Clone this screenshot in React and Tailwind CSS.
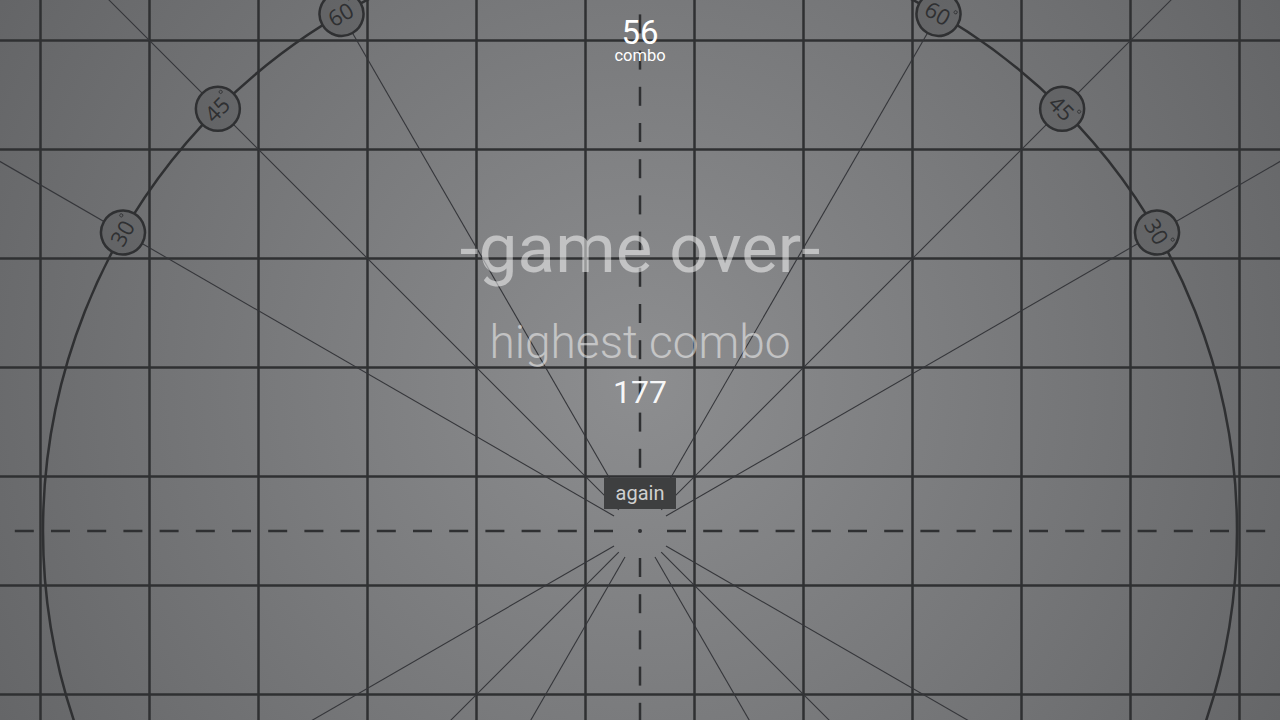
import React from 'react';

// geometry of the protractor board
const CX = 640;
const CY = 531;
const CELL = 109;
const R = 597;
const INK = '#2f3032';

const gridX = Array.from({ length: 12 }, (_, i) => CX + (i - 5.5) * CELL);
const gridY = Array.from({ length: 7 }, (_, i) => CY + (i - 4.5) * CELL);

const dashSteps = Array.from({ length: 17 }, (_, i) => 27 + i * 36.2);

const angles = [30, 45, 60];

function AngleLabel({ angle, side }) {
    const rad = (angle * Math.PI) / 180;
    const x = CX + side * R * Math.cos(rad);
    const y = CY - R * Math.sin(rad);
    const rot = side * (90 - angle);
    return (
        <g transform={`translate(${x} ${y}) rotate(${rot})`}>
            <circle r="22" fill="url(#board)" stroke={INK} strokeWidth="2.5" />
            <text
                x="-1"
                y="8"
                textAnchor="middle"
                fontSize="22"
                fill="#2f3032"
                style={{ fontFamily: '"Open Sans", "DejaVu Sans", sans-serif' }}
            >
                {angle}
            </text>
            <circle cx="14" cy="-10" r="1.6" fill="none" stroke="#2f3032" strokeWidth="0.8" />
        </g>
    );
}

function Board() {
    return (
        <svg className="absolute inset-0" width="1280" height="720" viewBox="0 0 1280 720">
            <defs>
                <radialGradient id="board" gradientUnits="userSpaceOnUse" cx="640" cy="380" r="760">
                    <stop offset="0" stopColor="#8d8e90" />
                    <stop offset="1" stopColor="#636466" />
                </radialGradient>
            </defs>

            {gridX.map((x) => (
                <line key={'v' + x} x1={x} y1="0" x2={x} y2="720" stroke={INK} strokeWidth="2.5" />
            ))}
            {gridY.map((y) => (
                <line key={'h' + y} x1="0" y1={y} x2="1280" y2={y} stroke={INK} strokeWidth="2.5" />
            ))}

            {angles.map((a) =>
                [1, -1].map((s) => {
                    const dx = Math.cos((a * Math.PI) / 180) * s;
                    const dy = Math.sin((a * Math.PI) / 180);
                    return (
                        <g key={`r${a}${s}`} stroke="#35363a" strokeWidth="1.1">
                            <line x1={CX - dx * 30} y1={CY - dy * 30} x2={CX - dx * 1600} y2={CY - dy * 1600} />
                            <line x1={CX + dx * 30} y1={CY + dy * 30} x2={CX + dx * 1600} y2={CY + dy * 1600} />
                        </g>
                    );
                })
            )}

            <circle cx={CX} cy={CY} r={R} fill="none" stroke={INK} strokeWidth="2.5" />

            <g stroke={INK} strokeWidth="2.5">
                {dashSteps.map((d) => (
                    <g key={'d' + d}>
                        <line x1={CX - d} y1={CY} x2={CX - d - 19} y2={CY} />
                        <line x1={CX + d} y1={CY} x2={CX + d + 19} y2={CY} />
                        <line x1={CX} y1={CY - d} x2={CX} y2={CY - d - 19} />
                        <line x1={CX} y1={CY + d} x2={CX} y2={CY + d + 19} />
                    </g>
                ))}
            </g>
            <circle cx={CX} cy={CY} r="2" fill={INK} />

            {angles.map((a) => (
                <g key={'l' + a}>
                    <AngleLabel angle={a} side={-1} />
                    <AngleLabel angle={a} side={1} />
                </g>
            ))}
        </svg>
    );
}

export default function App() {
    return (
        <div
            className="relative w-full h-[720px] overflow-hidden bg-[radial-gradient(760px_circle_at_640px_380px,#8d8e90,#636466)]"
            style={{ fontFamily: 'Roboto, "Liberation Sans", sans-serif' }}
        >
            <Board />
            <div className="relative flex flex-col items-center">
                <div className="pt-[16px] text-[33px] leading-none text-white">56</div>
                <div className="mt-[-1px] text-[16.5px] leading-none text-white">combo</div>
                <div className="mt-[149px] text-[69px] leading-none text-white/50">-game over-</div>
                <div className="mt-[36px] text-[46px] leading-none font-light text-white/50">highest combo</div>
                <div className="mt-[11px] text-[32px] leading-none text-white/95">177</div>
                <button className="mt-[70px] h-[31px] px-[12px] flex items-center bg-[#3e3f40] text-[20px] leading-none text-[#cfcfcf]">
                    again
                </button>
            </div>
        </div>
    );
}
